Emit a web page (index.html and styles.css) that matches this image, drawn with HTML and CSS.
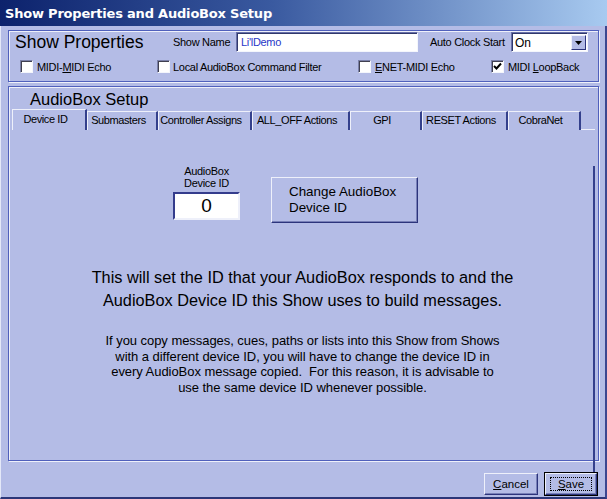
FILE: index.html
```html
<!DOCTYPE html>
<html lang="en">
<head>
    <meta charset="UTF-8">
    <title>Show Properties and AudioBox Setup</title>
    <link rel="stylesheet" href="styles.css">
</head>
<body>
    <div class="window">
        <div class="titlebar">Show Properties and AudioBox Setup</div>
        <div class="client">
            <div class="group show-group">
                <div class="show-row">
                    <div class="show-title">Show Properties</div>
                    <div class="field-label name-label">Show Name</div>
                    <div class="textbox name-box">Li'lDemo</div>
                    <div class="field-label clock-label">Auto Clock Start</div>
                    <div class="combo">
                        <span class="combo-value">On</span>
                        <span class="combo-btn">
                            <svg width="7" height="4" viewBox="0 0 7 4"><path d="M0 0H7L3.5 4Z" fill="#000"/></svg>
                        </span>
                    </div>
                </div>
                <div class="check-row">
                    <div class="check c1"><span class="box"></span><span>MIDI-<u>M</u>IDI Echo</span></div>
                    <div class="check c2"><span class="box"></span><span>Local AudioBox Command Filter</span></div>
                    <div class="check c3"><span class="box"></span><span><u>E</u>NET-MIDI Echo</span></div>
                    <div class="check c4">
                        <span class="box">
                            <svg width="9" height="9" viewBox="0 0 9 9"><path d="M1 4L3.5 6.5L8 1.5" stroke="#000" stroke-width="2" fill="none"/></svg>
                        </span>
                        <span>MIDI <u>L</u>oopBack</span>
                    </div>
                </div>
            </div>

            <div class="group audio-group">
                <div class="audio-title">AudioBox Setup</div>
                <div class="tabs">
                    <div class="tab active t1">Device ID</div>
                    <div class="tab t2">Submasters</div>
                    <div class="tab t3">Controller Assigns</div>
                    <div class="tab t4">ALL_OFF Actions</div>
                    <div class="tab t5">GPI</div>
                    <div class="tab t6">RESET Actions</div>
                    <div class="tab t7">CobraNet</div>
                    <div class="tab-fill"></div>
                </div>
                <div class="tab-panel">
                    <div class="device-row">
                        <div class="id-col">
                            <div class="id-label">AudioBox<br>Device ID</div>
                            <div class="id-box">0</div>
                        </div>
                        <button class="change-btn">Change AudioBox<br>Device ID</button>
                    </div>
                    <p class="big-text">This will set the ID that your AudioBox responds to and the<br>AudioBox Device ID this Show uses to build messages.</p>
                    <p class="small-text">If you copy messages, cues, paths or lists into this Show from Shows<br>with a different device ID, you will have to change the device ID in<br>every AudioBox message copied.&nbsp; For this reason, it is advisable to<br>use the same device ID whenever possible.</p>
                </div>
            </div>

            <div class="footer">
                <button class="btn cancel"><u>C</u>ancel</button>
                <button class="btn save"><span class="focus"><u>S</u>ave</span></button>
            </div>
        </div>
    </div>
</body>
</html>
```

FILE: styles.css
```css
* {
    box-sizing: border-box;
}
body {
    margin: 0;
    font-family: "Liberation Sans", Arial, sans-serif;
    background-color: #b4bce6;
    color: #000;
}
.window {
    width: 607px;
    height: 499px;
    display: flex;
    flex-direction: column;
    background-color: #b4bce6;
}
.titlebar {
    height: 26px;
    padding: 1px 0 0 5px;
    line-height: 25px;
    background: linear-gradient(to right, #0c226c, #3a5aa0 45%, #a8caf0);
    color: #fff;
    font-family: "DejaVu Sans", sans-serif;
    font-weight: bold;
    font-size: 13px;
    letter-spacing: -0.2px;
}
.client {
    flex: 1;
    padding: 4px 6px 0 7px;
    border-left: 1px solid #e4e8f8;
    border-right: 2px solid #3c4690;
    border-bottom: 2px solid #2c3678;
}
.group {
    border: 1px solid #5060bc;
    box-shadow: inset 1px 1px 0 #eef0fa, 1px 1px 0 #eef0fa;
}

/* show properties */
.show-group {
    height: 52px;
    padding: 1px 0 0 6px;
}
.show-row {
    display: flex;
    align-items: center;
    height: 20px;
}
.show-title {
    width: 158px;
    font-size: 17.5px;
}
.field-label {
    font-size: 11px;
    letter-spacing: -0.3px;
}
.name-label {
    width: 63px;
}
.textbox,
.combo {
    height: 20px;
    background-color: #fff;
    border: 1px solid;
    border-color: #6870a8 #f4f6fc #f4f6fc #6870a8;
    box-shadow: inset 1px 1px 0 #30386c;
}
.name-box {
    width: 182px;
    padding: 3px 0 0 4px;
    font-size: 11px;
    letter-spacing: -0.3px;
    color: #2838c8;
}
.clock-label {
    margin-left: 12px;
    width: 81px;
}
.combo {
    width: 77px;
    display: flex;
    align-items: center;
    justify-content: space-between;
    padding: 1px 1px 0 3px;
}
.combo-value {
    font-size: 12px;
}
.combo-btn {
    width: 15px;
    height: 15px;
    display: flex;
    align-items: center;
    justify-content: center;
    background-color: #b4bce6;
    border: 1px solid;
    border-color: #eef0fa #2c347c #2c347c #eef0fa;
}
.check-row {
    display: flex;
    align-items: center;
    height: 13px;
    margin: 8px 0 0 5px;
    font-size: 11px;
    letter-spacing: -0.3px;
}
.check {
    display: flex;
    align-items: center;
}
.c1 { width: 137px; }
.c2 { width: 201px; }
.c3 { width: 133px; }
.box {
    width: 13px;
    height: 13px;
    margin-right: 4px;
    display: flex;
    align-items: center;
    justify-content: center;
    background-color: #fff;
    border: 1px solid;
    border-color: #7a80a8 #f4f6fc #f4f6fc #7a80a8;
    box-shadow: inset 1px 1px 0 #404050;
}
.c2 .box {
    margin-right: 3px;
}

/* audiobox setup */
.audio-group {
    margin-top: 4px;
    height: 375px;
    padding: 3px 3px 2px 3px;
}
.audio-title {
    height: 19px;
    line-height: 19px;
    margin-left: 18px;
    font-size: 16.5px;
}
.tabs {
    display: flex;
    align-items: flex-end;
    height: 21px;
}
.tab {
    height: 19px;
    padding-right: 7px;
    line-height: 17px;
    text-align: center;
    font-size: 11px;
    letter-spacing: -0.4px;
    border-top: 1px solid #eef0fa;
    border-left: 1px solid #eef0fa;
    border-right: 2px solid #34408c;
}
.tab.active {
    height: 21px;
    line-height: 19px;
    padding-bottom: 1px;
}
.t1 { width: 75px; }
.t2 { width: 71px; }
.t3 { width: 94px; }
.t4 { width: 98px; }
.t5 { width: 72px; }
.t6 { width: 86px; }
.t7 { width: 73px; }
.tab-fill {
    flex: 1;
    height: 1px;
    border-bottom: 1px solid #eef0fa;
}
.tab-panel {
    height: 328px;
    border-right: 2px solid #34408c;
}
.device-row {
    display: flex;
    align-items: flex-start;
    margin-top: 36px;
    padding-left: 161px;
}
.id-col {
    width: 67px;
}
.id-label {
    font-size: 11px;
    line-height: 11.5px;
    letter-spacing: -0.3px;
    text-align: center;
}
.id-box {
    height: 28px;
    margin-top: 3px;
    background-color: #fff;
    border: 2px solid;
    border-color: #343c8c #eef0fa #eef0fa #343c8c;
    text-align: center;
    font-size: 19px;
    line-height: 24px;
}
.change-btn {
    width: 147px;
    height: 46px;
    margin: 11px 0 0 31px;
    padding: 0 0 0 17px;
    text-align: left;
    font-family: "Liberation Sans", Arial, sans-serif;
    font-size: 13.4px;
    line-height: 16px;
    color: #000;
    background-color: #b4bce6;
    border: 1px solid;
    border-color: #eef0fa #2c347c #2c347c #eef0fa;
    box-shadow: inset -1px -1px 0 #7880b8;
}
.big-text {
    margin: 43px 0 0;
    text-align: center;
    font-size: 16.3px;
    line-height: 23px;
}
.small-text {
    margin: 21px 0 0;
    text-align: center;
    font-size: 13px;
    letter-spacing: -0.05px;
    line-height: 15.7px;
}

/* buttons */
.footer {
    display: flex;
    justify-content: flex-end;
    gap: 7px;
    margin: 12px 2px 0 0;
}
.btn {
    height: 22px;
    padding: 0;
    font-family: "Liberation Sans", Arial, sans-serif;
    font-size: 11.5px;
    color: #000;
    background-color: #b4bce6;
    border: 1px solid;
    border-color: #eef0fa #2c347c #2c347c #eef0fa;
    box-shadow: inset -1px -1px 0 #7880b8;
}
.cancel {
    width: 54px;
}
.save {
    width: 52px;
    box-shadow: 0 0 0 1px #000, inset -1px -1px 0 #7880b8;
    display: flex;
    align-items: center;
    justify-content: center;
}
.focus {
    display: block;
    width: 42px;
    height: 14px;
    line-height: 12px;
    border: 1px dotted #000;
}
```
